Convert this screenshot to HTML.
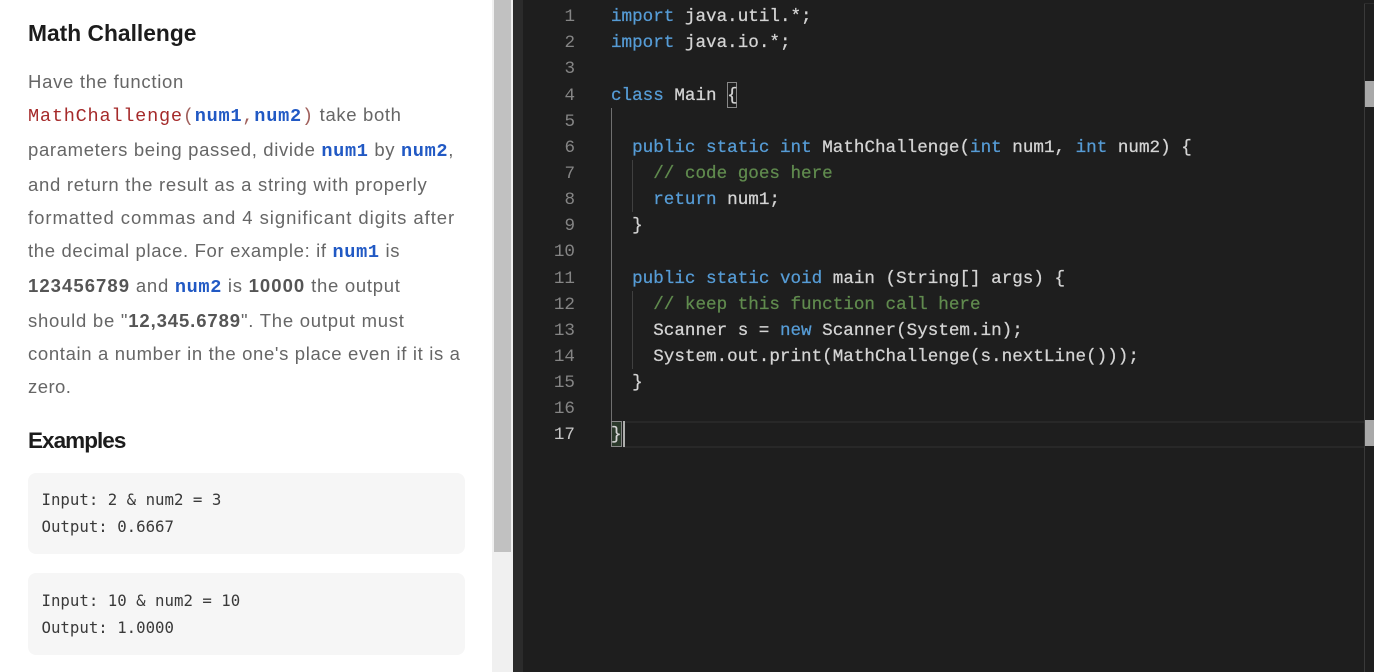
<!DOCTYPE html>
<html><head><meta charset="utf-8">
<style>
html,body{margin:0;padding:0;width:1374px;height:672px;overflow:hidden;background:#fff}
div,span{position:absolute;white-space:pre}
span.i,b,code{position:static}
.t{left:28px;font:18.5px/24px "Liberation Sans",sans-serif;color:#666;letter-spacing:.65px}
.t b{color:#555;font-weight:700;letter-spacing:1.05px}
.t code{font:bold 18.6px/24px "Liberation Mono",monospace;color:#2159c4}
.t code.r{font-weight:400;color:#a52a2a}
.t code.p{font-weight:400;color:#a0605c}
.h{left:28px;font:bold 22.8px/30px "Liberation Sans",sans-serif;color:#1c1c1c}
.box{left:28px;width:437px;background:#f6f6f6;border-radius:8px}
.m{left:41.5px;font:15.72px/20px "DejaVu Sans Mono",monospace;color:#3a3a3a}
.n{left:523px;width:52px;text-align:right;font:17.6px/26px "Liberation Mono",monospace;color:#858585}
.c{font:17.6px/26px "Liberation Mono",monospace;color:#d4d4d4;left:611px;-webkit-text-stroke:.25px currentColor}
.c i{font-style:normal;color:#569cd6}
.c u{text-decoration:none;color:#608b4e}
.l2 code{letter-spacing:.75px}
</style></head><body>

<div style="left:492px;top:0;width:21px;height:672px;background:#f0f0f0"></div>
<div style="left:494px;top:0;width:17px;height:552px;background:#c1c1c1"></div>
<div style="left:513px;top:0;width:10px;height:672px;background:#2b2b2b"></div>
<div style="left:523px;top:0;width:851px;height:672px;background:#1e1e1e"></div>

<div class="h" style="top:18px">Math Challenge</div>
<div class="t" style="top:70px;letter-spacing:.71px">Have the function</div>
<div class="t l2" style="top:103px"><code class="r">MathChallenge</code><code class="p">(</code><code>num1</code><code class="p">,</code><code>num2</code><code class="p">)</code> take both</div>
<div class="t" style="top:138px">parameters being passed, divide <code>num1</code> by <code>num2</code>,</div>
<div class="t" style="top:173px;letter-spacing:.71px">and return the result as a string with properly</div>
<div class="t" style="top:206px;letter-spacing:.95px">formatted commas and 4 significant digits after</div>
<div class="t" style="top:239px">the decimal place. For example: if <code>num1</code> is</div>
<div class="t" style="top:274px;letter-spacing:.72px"><b>123456789</b> and <code style="letter-spacing:.65px">num2</code> is <b>10000</b> the output</div>
<div class="t" style="top:309px;letter-spacing:.75px">should be "<b style="letter-spacing:.9px">12,345.6789</b>". The output must</div>
<div class="t" style="top:342px">contain a number in the one's place even if it is a</div>
<div class="t" style="top:375px;letter-spacing:.45px">zero.</div>
<div class="h" style="top:426px;font-size:22.5px;letter-spacing:-.96px">Examples</div>

<div class="box" style="top:473px;height:81px"></div>
<div class="m" style="top:490px">Input: 2 &amp; num2 = 3</div>
<div class="m" style="top:517px">Output: 0.6667</div>
<div class="box" style="top:573px;height:82px"></div>
<div class="m" style="top:591px">Input: 10 &amp; num2 = 10</div>
<div class="m" style="top:618px">Output: 1.0000</div>

<div class="n" style="top:4px">1</div>
<div class="n" style="top:30px">2</div>
<div class="n" style="top:56px">3</div>
<div class="n" style="top:83px">4</div>
<div class="n" style="top:109px">5</div>
<div class="n" style="top:135px">6</div>
<div class="n" style="top:161px">7</div>
<div class="n" style="top:187px">8</div>
<div class="n" style="top:213px">9</div>
<div class="n" style="top:239px">10</div>
<div class="n" style="top:266px">11</div>
<div class="n" style="top:292px">12</div>
<div class="n" style="top:318px">13</div>
<div class="n" style="top:344px">14</div>
<div class="n" style="top:370px">15</div>
<div class="n" style="top:396px">16</div>
<div class="n" style="top:422px;color:#c6c6c6">17</div>

<div style="left:611px;top:108px;width:1px;height:313px;background:#707070"></div>
<div style="left:632px;top:160px;width:1px;height:52px;background:#404040"></div>
<div style="left:632px;top:291px;width:1px;height:78px;background:#404040"></div>

<div style="left:623px;top:421px;width:741px;height:23px;border-top:2px solid #282828;border-bottom:2px solid #282828"></div>
<div style="left:611px;top:421px;width:11px;height:26px;background:#2b3a2b;box-sizing:border-box;border:1px solid #888"></div>
<div style="left:623px;top:421px;width:2px;height:26px;background:#aeafad"></div>
<div style="left:727px;top:82px;width:10px;height:26px;box-sizing:border-box;border:1px solid #888"></div>

<div class="c" style="top:4px"><i>import</i> java.util.*;</div>
<div class="c" style="top:30px"><i>import</i> java.io.*;</div>
<div class="c" style="top:83px"><i>class</i> Main {</div>
<div class="c" style="top:135px">  <i>public</i> <i>static</i> <i>int</i> MathChallenge(<i>int</i> num1, <i>int</i> num2) {</div>
<div class="c" style="top:161px">    <u>// code goes here</u></div>
<div class="c" style="top:187px">    <i>return</i> num1;</div>
<div class="c" style="top:213px">  }</div>
<div class="c" style="top:266px">  <i>public</i> <i>static</i> <i>void</i> main (String[] args) {</div>
<div class="c" style="top:292px">    <u>// keep this function call here</u></div>
<div class="c" style="top:318px">    Scanner s = <i>new</i> Scanner(System.in);</div>
<div class="c" style="top:344px">    System.out.print(MathChallenge(s.nextLine()));</div>
<div class="c" style="top:370px">  }</div>
<div class="c" style="top:422px">}</div>

<div style="left:1364px;top:3px;width:1px;height:669px;background:#3a3a3a"></div>
<div style="left:1364px;top:3px;width:10px;height:1px;background:#2c2c2c"></div>
<div style="left:1365px;top:81px;width:9px;height:26px;background:#a9a9a9"></div>
<div style="left:1365px;top:420px;width:9px;height:26px;background:#a9a9a9"></div>
</body></html>
